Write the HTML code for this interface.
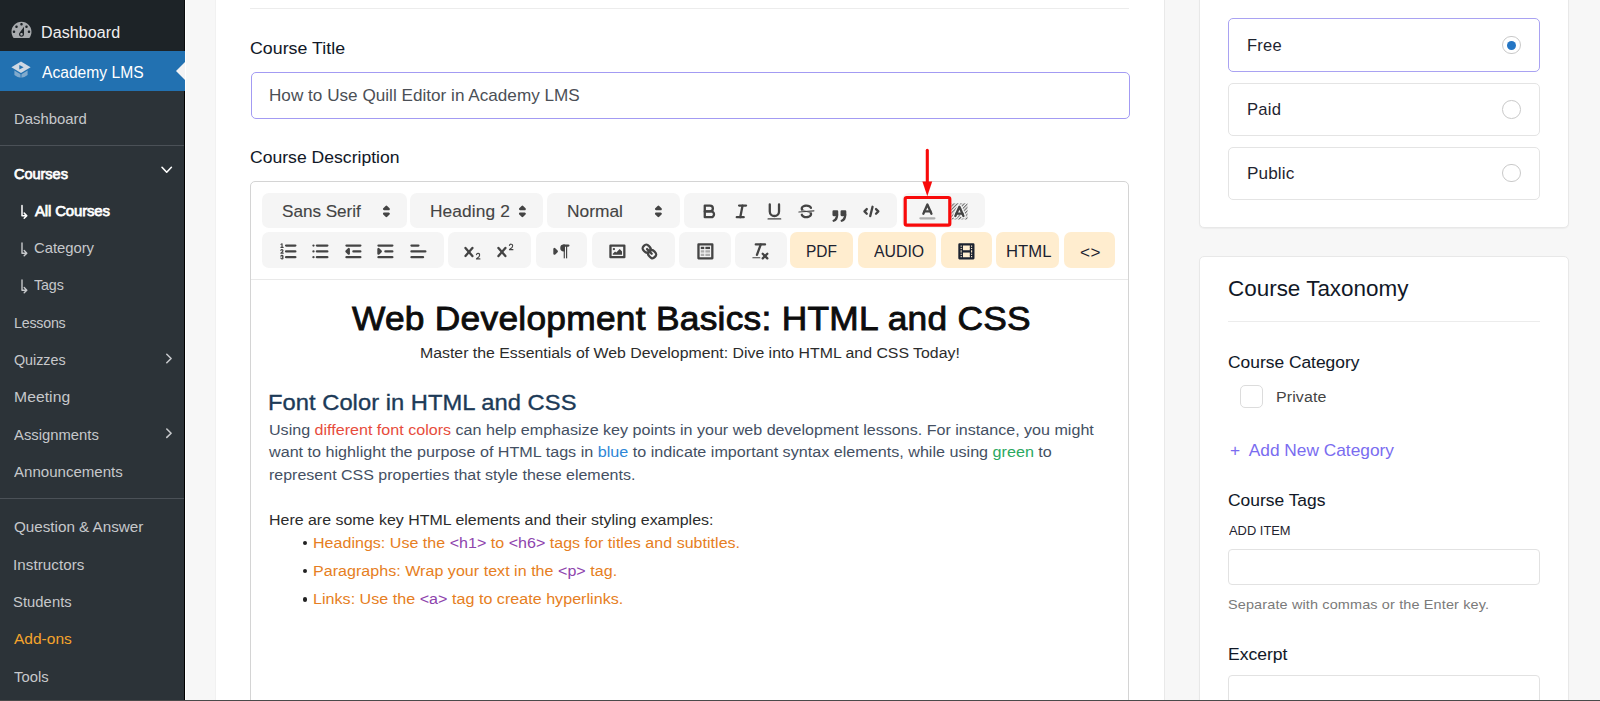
<!DOCTYPE html>
<html lang="en"><head><meta charset="utf-8"><title>Academy LMS – Edit Course</title>
<style>
html,body{margin:0;padding:0}
body{width:1600px;height:701px;overflow:hidden;position:relative;background:#f7f7f7;font-family:"Liberation Sans",sans-serif}
.t{position:absolute;white-space:nowrap;display:block;transform-origin:0 50%}
.b{position:absolute;box-sizing:border-box}
svg{position:absolute;overflow:visible}
.g{position:absolute;background:#f5f5f5;border-radius:7px}
.o{position:absolute;background:#ffedcf;border-radius:7px}
.q{width:20.8px;height:20.8px}
.q .s{fill:none;stroke:#444;stroke-width:2;stroke-linecap:round;stroke-linejoin:round}
.q .f{fill:#444}
.q .sf{fill:#444;stroke:#444;stroke-width:2;stroke-linecap:round;stroke-linejoin:round}
.q .th{stroke-width:1}
.q .tr{opacity:.4}
.q.v .s{stroke:#1c2230}.q.v .f{fill:#1c2230}

</style></head>
<body>
<!-- sidebar -->
<div class="b" style="left:0;top:0;width:185px;height:701px;background:#2c3338"></div>
<div class="b" style="left:0;top:0;width:185px;height:51px;background:#1d2327"></div>
<div class="b" style="left:0;top:51px;width:185px;height:40px;background:#2271b1"></div>
<div class="b" style="left:184px;top:0;width:1px;height:51px;background:#0a0c0e"></div>
<div class="b" style="left:184px;top:91px;width:1px;height:610px;background:#000"></div>
<div class="b" style="left:185px;top:0;width:1px;height:701px;background:#fff"></div>
<div class="b" style="left:0;top:145px;width:184px;height:1px;background:#4b5157"></div>
<div class="b" style="left:0;top:498px;width:184px;height:1px;background:#4b5157"></div>
<!-- main card -->
<div class="b" style="left:215px;top:-10px;width:950px;height:720px;background:#fff;border-right:1px solid #e9e9e9;border-left:1px solid #f1f1f1"></div>
<div class="b" style="left:250px;top:8px;width:879px;height:1px;background:#ececec"></div>
<div class="b" style="left:251px;top:72px;width:879px;height:47px;border:1px solid #a39bf3;border-radius:5px;background:#fff"></div>
<div class="b" style="left:250px;top:181px;width:879px;height:540px;border:1px solid #d4d4d4;border-radius:5px;background:#fff"></div>
<div class="b" style="left:251px;top:279px;width:877px;height:1px;background:#e9e9e9"></div>
<!-- right cards -->
<div class="b" style="left:1199px;top:-10px;width:370px;height:238px;background:#fff;border:1px solid #e8e8e8;border-radius:5px;box-shadow:0 1px 1px rgba(0,0,0,.04)"></div>
<div class="b" style="left:1199px;top:256px;width:370px;height:470px;background:#fff;border:1px solid #e8e8e8;border-radius:5px;box-shadow:0 1px 1px rgba(0,0,0,.04)"></div>
<div class="b" style="left:1228px;top:18px;width:312px;height:54px;border:1px solid #a9a2f2;border-radius:5px"></div>
<div class="b" style="left:1228px;top:83px;width:312px;height:53px;border:1px solid #e4e4e4;border-radius:5px"></div>
<div class="b" style="left:1228px;top:147px;width:312px;height:53px;border:1px solid #e4e4e4;border-radius:5px"></div>
<div class="b" style="left:1228px;top:321px;width:312px;height:1px;background:#ececec"></div>
<div class="b" style="left:1240px;top:385px;width:23px;height:23px;border:1px solid #dcdcdc;border-radius:5px"></div>
<div class="b" style="left:1228px;top:549px;width:312px;height:36px;border:1px solid #e2e2e2;border-radius:4px"></div>
<div class="b" style="left:1228px;top:675px;width:312px;height:60px;border:1px solid #e2e2e2;border-radius:4px"></div>
<!-- bottom edge -->
<div class="b" style="left:0;top:700px;width:1600px;height:1px;background:#4a4a4a;z-index:5"></div>
<!-- quill toolbar -->
<div class="g" style="left:262.20px;top:193.25px;width:144.45px;height:34.75px"></div>
<div class="g" style="left:410.45px;top:193.25px;width:132.95px;height:34.75px"></div>
<div class="g" style="left:546.70px;top:193.25px;width:132.95px;height:34.75px"></div>
<div class="g" style="left:683.95px;top:193.25px;width:213.45px;height:34.75px"></div>
<div class="g" style="left:901.70px;top:193.25px;width:83.70px;height:34.75px"></div>
<div class="g" style="left:262.20px;top:232.00px;width:181.95px;height:35.50px"></div>
<div class="g" style="left:447.70px;top:232.00px;width:83.45px;height:35.50px"></div>
<div class="g" style="left:535.70px;top:232.00px;width:51.45px;height:35.50px"></div>
<div class="g" style="left:591.70px;top:232.00px;width:83.70px;height:35.50px"></div>
<div class="g" style="left:679.20px;top:232.00px;width:51.95px;height:35.50px"></div>
<div class="g" style="left:734.70px;top:232.00px;width:51.95px;height:35.50px"></div>
<div class="o" style="left:790.20px;top:232.00px;width:62.70px;height:35.50px"></div>
<div class="o" style="left:857.70px;top:232.00px;width:78.45px;height:35.50px"></div>
<div class="o" style="left:940.70px;top:232.00px;width:51.60px;height:35.50px"></div>
<div class="o" style="left:996.10px;top:232.00px;width:63.10px;height:35.50px"></div>
<div class="o" style="left:1063.50px;top:232.00px;width:51.40px;height:35.50px"></div>
<svg class="q" viewBox="0 0 18 18" style="left:376.05px;top:200.50px"><polygon class="s" points="7 11 9 13 11 11 7 11"/><polygon class="s" points="7 7 9 5 11 7 7 7"/></svg>
<svg class="q" viewBox="0 0 18 18" style="left:512.20px;top:200.50px"><polygon class="s" points="7 11 9 13 11 11 7 11"/><polygon class="s" points="7 7 9 5 11 7 7 7"/></svg>
<svg class="q" viewBox="0 0 18 18" style="left:648.00px;top:200.50px"><polygon class="s" points="7 11 9 13 11 11 7 11"/><polygon class="s" points="7 7 9 5 11 7 7 7"/></svg>
<svg class="q" viewBox="0 0 18 18" style="left:698.95px;top:200.50px"><path class="s" d="M5,4H9.5A2.5,2.5,0,0,1,12,6.5v0A2.5,2.5,0,0,1,9.5,9H5V4Z"/><path class="s" d="M5,9h5.5A2.5,2.5,0,0,1,13,11.5v0A2.5,2.5,0,0,1,10.5,14H5V9Z"/></svg>
<svg class="q" viewBox="0 0 18 18" style="left:731.35px;top:200.50px"><line class="s" x1="7" x2="13" y1="4" y2="4"/><line class="s" x1="5" x2="11" y1="14" y2="14"/><line class="s" x1="8" x2="10" y1="14" y2="4"/></svg>
<svg class="q" viewBox="0 0 18 18" style="left:763.75px;top:200.50px"><path class="s" d="M5,3V9a4.012,4.012,0,0,0,4,4H9a4.012,4.012,0,0,0,4-4V3"/><rect class="f" height="1" rx="0.5" ry="0.5" width="12" x="3" y="15"/></svg>
<svg class="q" viewBox="0 0 18 18" style="left:796.15px;top:200.50px"><line class="s th" x1="15.5" x2="2.5" y1="8.5" y2="9.5"/><path class="f" d="M9.007,8C6.542,7.791,6,7.519,6,6.5,6,5.792,7.283,5,9,5c1.571,0,2.765.679,2.969,1.309a1,1,0,0,0,1.9-.617C13.356,4.106,11.354,3,9,3,6.2,3,4,4.538,4,6.5a3.2,3.2,0,0,0,.5,1.843Z"/><path class="f" d="M8.984,10C11.457,10.208,12,10.479,12,11.5c0,0.708-1.283,1.5-3,1.5-1.571,0-2.765-.679-2.969-1.309a1,1,0,1,0-1.9.617C4.644,13.894,6.646,15,9,15c2.8,0,5-1.538,5-3.5a3.2,3.2,0,0,0-.5-1.843Z"/></svg>
<svg class="q" viewBox="0 0 18 18" style="left:828.55px;top:200.50px"><g transform="translate(0 4.1)"><rect class="sf" height="3" width="3" x="4" y="5"/><rect class="sf" height="3" width="3" x="11" y="5"/><path class="sf" d="M7,8c0,4.031-3,5-3,5"/><path class="sf" d="M14,8c0,4.031-3,5-3,5"/></g></svg>
<svg class="q" viewBox="0 0 18 18" style="left:860.95px;top:200.50px"><polyline class="s" points="5 7 3 9 5 11"/><polyline class="s" points="13 7 15 9 13 11"/><line class="s" x1="10" x2="8" y1="5" y2="13"/></svg>
<svg class="q" viewBox="0 0 18 18" style="left:916.70px;top:200.50px"><line class="s tr" x1="3" x2="15" y1="15" y2="15"/><polyline class="s" points="5.5 11 9 3 12.5 11"/><line class="s" x1="11.63" x2="6.38" y1="9" y2="9"/></svg>
<svg class="q" viewBox="0 0 18 18" style="left:949.10px;top:200.50px"><defs><pattern id="chk" x="0" y="0" width="2.1" height="2.1" patternUnits="userSpaceOnUse" patternTransform="rotate(-45)"><rect x="0" y="0" width="2.1" height="0.95" fill="#444"/></pattern></defs><rect x="2" y="2" width="14" height="14" fill="url(#chk)" opacity=".78"/><polyline points="5.5 13 9 5 12.5 13" fill="none" stroke="#f5f5f5" stroke-width="4.2" stroke-linecap="round" stroke-linejoin="round"/><polyline class="s" points="5.5 13 9 5 12.5 13"/><line class="s" x1="11.63" x2="6.38" y1="11" y2="11"/></svg>
<svg class="q" viewBox="0 0 18 18" style="left:278.00px;top:240.90px"><line class="s" x1="7" x2="15" y1="4" y2="4"/><line class="s" x1="7" x2="15" y1="9" y2="9"/><line class="s" x1="7" x2="15" y1="14" y2="14"/><line class="s th" x1="2.5" x2="4.5" y1="5.5" y2="5.5"/><path class="f" d="M3.5,6A0.5,0.5,0,0,1,3,5.5V3.085l-0.276.138A0.5,0.5,0,0,1,2.053,3c-0.124-.247-0.023-0.324.224-0.447l1-.5A0.5,0.5,0,0,1,4,2.5v3A0.5,0.5,0,0,1,3.5,6Z"/><path class="s th" d="M4.5,10.5h-2c0-.234,1.85-1.076,1.85-2.234A0.959,0.959,0,0,0,2.5,8.156"/><path class="s th" d="M2.5,14.846a0.959,0.959,0,0,0,1.85-.109A0.7,0.7,0,0,0,3.75,14a0.688,0.688,0,0,0,.6-0.736,0.959,0.959,0,0,0-1.85-.109"/></svg>
<svg class="q" viewBox="0 0 18 18" style="left:310.40px;top:240.90px"><line class="s" x1="6" x2="15" y1="4" y2="4"/><line class="s" x1="6" x2="15" y1="9" y2="9"/><line class="s" x1="6" x2="15" y1="14" y2="14"/><line class="s" x1="3" x2="3" y1="4" y2="4"/><line class="s" x1="3" x2="3" y1="9" y2="9"/><line class="s" x1="3" x2="3" y1="14" y2="14"/></svg>
<svg class="q" viewBox="0 0 18 18" style="left:342.80px;top:240.90px"><line class="s" x1="3" x2="15" y1="14" y2="14"/><line class="s" x1="3" x2="15" y1="4" y2="4"/><line class="s" x1="9" x2="15" y1="9" y2="9"/><polyline class="sf" points="5 7 5 11 3 9 5 7"/></svg>
<svg class="q" viewBox="0 0 18 18" style="left:375.20px;top:240.90px"><line class="s" x1="3" x2="15" y1="14" y2="14"/><line class="s" x1="3" x2="15" y1="4" y2="4"/><line class="s" x1="9" x2="15" y1="9" y2="9"/><polyline class="sf" points="3 7 3 11 5 9 3 7"/></svg>
<svg class="q" viewBox="0 0 18 18" style="left:407.60px;top:240.90px"><line class="s" x1="3" x2="15" y1="9" y2="9"/><line class="s" x1="3" x2="13" y1="14" y2="14"/><line class="s" x1="3" x2="9" y1="4" y2="4"/></svg>
<svg class="q" viewBox="0 0 18 18" style="left:462.30px;top:240.90px"><path class="f" d="M15.5,15H13.861a3.858,3.858,0,0,0,1.914-2.975,1.8,1.8,0,0,0-1.6-1.751A1.921,1.921,0,0,0,12.021,11.7a0.5,0.5,0,1,0,.957.291h0a0.914,0.914,0,0,1,1.053-.725,0.81,0.81,0,0,1,.744.762c0,1.076-1.17,1.87-1.94,2.431A1.456,1.456,0,0,0,12,15.5a0.5,0.5,0,0,0,.5.5h3A0.5,0.5,0,0,0,15.5,15Z"/><path class="f" d="M9.65,5.241a1,1,0,0,0-1.409.108L6,7.964,3.759,5.349A1,1,0,0,0,2.241,6.649L4.684,9.5,2.241,12.35A1,1,0,0,0,3.759,13.65L6,11.036,8.241,13.65a1,1,0,1,0,1.518-1.3L7.316,9.5,9.759,6.651A1,1,0,0,0,9.65,5.241Z"/></svg>
<svg class="q" viewBox="0 0 18 18" style="left:494.70px;top:240.90px"><path class="f" d="M15.5,7H13.861a4.015,4.015,0,0,0,1.914-2.975,1.8,1.8,0,0,0-1.6-1.751A1.922,1.922,0,0,0,12.021,3.7a0.5,0.5,0,1,0,.957.291,0.917,0.917,0,0,1,1.053-.725,0.81,0.81,0,0,1,.744.762c0,1.077-1.164,1.925-1.934,2.486A1.423,1.423,0,0,0,12,7.5a0.5,0.5,0,0,0,.5.5h3A0.5,0.5,0,0,0,15.5,7Z"/><path class="f" d="M9.651,5.241a1,1,0,0,0-1.41.108L6,7.964,3.759,5.349a1,1,0,1,0-1.519,1.3L4.683,9.5,2.241,12.35a1,1,0,1,0,1.519,1.3L6,11.036,8.241,13.65a1,1,0,0,0,1.519-1.3L7.317,9.5,9.759,6.651A1,1,0,0,0,9.651,5.241Z"/></svg>
<svg class="q" viewBox="0 0 18 18" style="left:551.00px;top:240.90px"><polygon class="sf" points="3 11 5 9 3 7 3 11"/><line class="sf" x1="15" x2="11" y1="4" y2="4"/><path class="f" d="M11,3a3,3,0,0,0,0,6h1V3H11Z"/><rect class="f" height="11" width="1" x="11" y="4"/><rect class="f" height="11" width="1" x="13" y="4"/></svg>
<svg class="q" viewBox="0 0 18 18" style="left:606.50px;top:240.90px"><rect class="s" height="10" width="12" x="3" y="4"/><circle class="f" cx="6" cy="7" r="1"/><polyline class="f" points="5 12 5 11 7 9 8 10 11 7 13 9 13 12 5 12"/></svg>
<svg class="q" viewBox="0 0 18 18" style="left:638.90px;top:240.90px"><line class="s" x1="7" x2="11" y1="7" y2="11"/><path class="s" d="M8.9,4.577a3.476,3.476,0,0,1,.36,4.679A3.476,3.476,0,0,1,4.577,8.9C3.185,7.5,2.035,6.4,4.217,4.217S7.5,3.185,8.9,4.577Z"/><path class="s" d="M13.423,9.1a3.476,3.476,0,0,0-4.679-.36,3.476,3.476,0,0,0,.36,4.679c1.392,1.392,2.5,2.542,4.679.36S14.815,10.5,13.423,9.1Z"/></svg>
<svg class="q" viewBox="0 0 18 18" style="left:695.00px;top:240.90px"><rect class="s" height="12" width="12" x="3" y="3"/><rect class="f" height="2" width="3" x="5" y="5"/><rect class="f" height="2" width="4" x="9" y="5"/><g class="f tr"><rect height="2" width="3" x="5" y="8"/><rect height="2" width="4" x="9" y="8"/><rect height="2" width="3" x="5" y="11"/><rect height="2" width="4" x="9" y="11"/></g></svg>
<svg class="q" viewBox="0 0 18 18" style="left:749.90px;top:240.90px"><line class="s" x1="5" x2="13" y1="3" y2="3"/><line class="s" x1="6" x2="9.35" y1="12" y2="3"/><line class="s" x1="11" x2="15" y1="11" y2="15"/><line class="s" x1="15" x2="11" y1="11" y2="15"/><rect class="f" height="1" rx="0.5" ry="0.5" width="7" x="2" y="14"/></svg>
<svg class="q v" viewBox="0 0 18 18" style="left:956.00px;top:240.90px"><rect class="s" height="12" width="12" x="3" y="3"/><rect class="f" height="12" width="1" x="5" y="3"/><rect class="f" height="12" width="1" x="12" y="3"/><rect class="f" height="2" width="8" x="5" y="8"/><rect class="f" height="1" width="3" x="3" y="5"/><rect class="f" height="1" width="3" x="3" y="7"/><rect class="f" height="1" width="3" x="3" y="10"/><rect class="f" height="1" width="3" x="3" y="12"/><rect class="f" height="1" width="3" x="12" y="5"/><rect class="f" height="1" width="3" x="12" y="7"/><rect class="f" height="1" width="3" x="12" y="10"/><rect class="f" height="1" width="3" x="12" y="12"/></svg>
<svg style="left:0;top:0;width:1600px;height:701px" viewBox="0 0 1600 701"><rect x="905.2" y="197.5" width="44.6" height="27.7" rx="1.6" fill="none" stroke="#f80a0a" stroke-width="3.2"/><line x1="927.3" y1="150.4" x2="927.3" y2="184" stroke="#f80a0a" stroke-width="3.1" stroke-linecap="round"/><path d="M922.4 181.4 L927.3 196.2 L932.2 181.4 Z" fill="#f80a0a"/></svg>
<!-- sidebar icons -->
<svg viewBox="0 0 20 20" style="left:8.5px;top:17.6px;width:25px;height:25px"><path fill="#a7aaad" fill-rule="evenodd" d="M3.76 16h12.48c1.100-1.370 1.760-3.110 1.760-5 0-4.420-3.580-8-8-8s-8 3.580-8 8c0 1.890.660 3.630 1.760 5zM10 4c.55 0 1 .45 1 1s-.45 1-1 1-1-.45-1-1 .45-1 1-1zM6 6c.55 0 1 .45 1 1s-.45 1-1 1-1-.45-1-1 .45-1 1-1zm8 0c.55 0 1 .45 1 1s-.45 1-1 1-1-.45-1-1 .45-1 1-1zm-5.370 5.550L12 7v6c0 1.100-.9 2-2 2s-2-.9-2-2c0-.570.240-1.080.630-1.450zM4 10c.55 0 1 .45 1 1s-.45 1-1 1-1-.45-1-1 .45-1 1-1zm12 0c.55 0 1 .45 1 1s-.45 1-1 1-1-.45-1-1 .45-1 1-1zm-5 3c0-.55-.45-1-1-1s-1 .45-1 1 .45 1 1 1 1-.45 1-1z"/></svg>
<svg viewBox="0 0 20 18" style="left:11px;top:61px;width:20px;height:18px"><path fill="#cfd8e3" d="M10 .5 L19.6 6.2 L10 12 L.4 6.2 Z"/><path fill="#2271b1" d="M8.3 3.9 L12.6 6.2 L8.3 8.5 Z"/><path fill="#cfd8e3" opacity=".55" d="M3.4 9.6 L10 13.6 L16.6 9.6 L16.6 14 Q10 19.5 3.4 14 Z"/><path fill="#2271b1" opacity=".7" d="M9.4 13 h1.2 v5 h-1.200z"/></svg>
<!-- current-menu notch -->
<svg viewBox="0 0 9 18" style="left:176px;top:62px;width:9px;height:18px"><path d="M9 0 L0 9 L9 18 Z" fill="#f3f3f4"/></svg>
<!-- sidebar chevrons / sub arrows -->
<svg viewBox="0 0 185 701" style="left:0;top:0;width:185px;height:701px" fill="none" stroke-linecap="round" stroke-linejoin="round">
<path d="M162 167.300 l4.700 4.900 l4.700-4.900" stroke="#fff" stroke-width="1.600"/>
<path d="M166.800 354.300 l4.300 4.200 l-4.300 4.200" stroke="#c6c8cb" stroke-width="1.600"/>
<path d="M166.800 429 l4.300 4.200 l-4.300 4.200" stroke="#c6c8cb" stroke-width="1.600"/>
<path d="M22 205.500 v10.200 h4.600 m-2.400-2.600 l2.600 2.600 l-2.600 2.600" stroke="#fff" stroke-width="1.500"/>
<path d="M22 243 v10.200 h4.600 m-2.400-2.600 l2.600 2.600 l-2.600 2.600" stroke="#c6c8cb" stroke-width="1.400"/>
<path d="M22 280 v10.200 h4.600 m-2.400-2.600 l2.600 2.600 l-2.600 2.600" stroke="#c6c8cb" stroke-width="1.400"/>
</svg>
<!-- radios -->
<div class="b" style="left:1502px;top:35.700px;width:18.600px;height:18.600px;border:1px solid #c9c9c9;border-radius:50%;background:#fff"></div>
<div class="b" style="left:1506.800px;top:40.500px;width:9px;height:9px;border-radius:50%;background:#2576c4"></div>
<div class="b" style="left:1502px;top:100px;width:18.600px;height:18.600px;border:1px solid #c9c9c9;border-radius:50%;background:#fff"></div>
<div class="b" style="left:1502px;top:163.900px;width:18.600px;height:18.600px;border:1px solid #c9c9c9;border-radius:50%;background:#fff"></div>
<!-- list bullets -->
<div class="b" style="left:302.500px;top:540.500px;width:4.800px;height:4.800px;border-radius:50%;background:#222"></div>
<div class="b" style="left:302.500px;top:568.500px;width:4.800px;height:4.800px;border-radius:50%;background:#222"></div>
<div class="b" style="left:302.500px;top:597px;width:4.800px;height:4.800px;border-radius:50%;background:#222"></div>

<!-- text layer -->
<span class="t" style="left:41.22px;top:23.26px;font-size:16px;line-height:20px;color:#f0f0f1;letter-spacing:0.08px;transform:scaleX(1.0028);">Dashboard</span>
<span class="t" style="left:41.85px;top:62.9px;font-size:16px;line-height:20px;color:#ffffff;letter-spacing:-0.01px;transform:scaleX(0.9774);">Academy LMS</span>
<span class="t" style="left:13.8px;top:109.3px;font-size:15px;line-height:19px;color:#c6c8cb;transform:scaleX(0.9920);">Dashboard</span>
<span class="t" style="left:13.93px;top:164.3px;font-size:15px;line-height:19px;color:#ffffff;letter-spacing:-0.08px;transform:scaleX(0.9739);-webkit-text-stroke:0.75px #fff;">Courses</span>
<span class="t" style="left:34.58px;top:201.22px;font-size:15px;line-height:19px;color:#ffffff;letter-spacing:-0.14px;transform:scaleX(0.9960);-webkit-text-stroke:0.75px #fff;">All Courses</span>
<span class="t" style="left:33.67px;top:238.22px;font-size:15px;line-height:19px;color:#c6c8cb;letter-spacing:-0.06px;transform:scaleX(0.9922);">Category</span>
<span class="t" style="left:34.08px;top:275.22px;font-size:15px;line-height:19px;color:#c6c8cb;letter-spacing:-0.12px;transform:scaleX(0.9531);">Tags</span>
<span class="t" style="left:13.9px;top:313.1px;font-size:15px;line-height:19px;color:#c6c8cb;letter-spacing:-0.24px;transform:scaleX(0.9500);">Lessons</span>
<span class="t" style="left:13.71px;top:350.3px;font-size:15px;line-height:19px;color:#c6c8cb;letter-spacing:-0.03px;transform:scaleX(0.9559);">Quizzes</span>
<span class="t" style="left:13.57px;top:386.86px;font-size:15px;line-height:19px;color:#c6c8cb;letter-spacing:0.06px;transform:scaleX(1.0454);">Meeting</span>
<span class="t" style="left:13.8px;top:424.8px;font-size:15px;line-height:19px;color:#c6c8cb;transform:scaleX(0.9875);">Assignments</span>
<span class="t" style="left:13.8px;top:462px;font-size:15px;line-height:19px;color:#c6c8cb;transform:scaleX(1.0036);">Announcements</span>
<span class="t" style="left:13.68px;top:517.22px;font-size:15px;line-height:19px;color:#c6c8cb;letter-spacing:-0.03px;transform:scaleX(1.0174);">Question &amp; Answer</span>
<span class="t" style="left:13.07px;top:555.1px;font-size:15px;line-height:19px;color:#c6c8cb;letter-spacing:0.06px;transform:scaleX(1.0110);">Instructors</span>
<span class="t" style="left:13.24px;top:592.3px;font-size:15px;line-height:19px;color:#c6c8cb;letter-spacing:0.06px;transform:scaleX(0.9845);">Students</span>
<span class="t" style="left:13.8px;top:629.3px;font-size:15px;line-height:19px;color:#f5a42c;transform:scaleX(1.0345);">Add-ons</span>
<span class="t" style="left:13.8px;top:666.8px;font-size:15px;line-height:19px;color:#c6c8cb;transform:scaleX(0.9877);">Tools</span>
<span class="t" style="left:250.48px;top:37.55px;font-size:16.6px;line-height:21px;color:#111827;letter-spacing:0.03px;transform:scaleX(1.0690);-webkit-text-stroke:0.05px #111827;">Course Title</span>
<span class="t" style="left:269.34px;top:85.32px;font-size:16.4px;line-height:20px;color:#4b4f56;letter-spacing:0.02px;transform:scaleX(1.0437);">How to Use Quill Editor in Academy LMS</span>
<span class="t" style="left:250.13px;top:146.75px;font-size:16.6px;line-height:21px;color:#111827;letter-spacing:0.02px;transform:scaleX(1.0574);-webkit-text-stroke:0.05px #111827;">Course Description</span>
<span class="t" style="left:281.95px;top:201.25px;font-size:16.6px;line-height:21px;color:#444444;letter-spacing:-0.04px;transform:scaleX(1.0346);-webkit-text-stroke:0.12px #444444;">Sans Serif</span>
<span class="t" style="left:429.67px;top:201.25px;font-size:16.6px;line-height:21px;color:#444444;letter-spacing:0.1px;transform:scaleX(1.0437);-webkit-text-stroke:0.12px #444444;">Heading 2</span>
<span class="t" style="left:567.2px;top:201.25px;font-size:16.6px;line-height:21px;color:#444444;transform:scaleX(1.0463);-webkit-text-stroke:0.12px #444444;">Normal</span>
<span class="t" style="left:805.99px;top:241.81px;font-size:16px;line-height:20px;color:#1c2230;letter-spacing:-0.04px;transform:scaleX(0.9656);">PDF</span>
<span class="t" style="left:874.22px;top:241.81px;font-size:16px;line-height:20px;color:#1c2230;letter-spacing:-0.01px;transform:scaleX(0.9897);">AUDIO</span>
<span class="t" style="left:1005.64px;top:241.81px;font-size:16px;line-height:20px;color:#1c2230;letter-spacing:0.07px;transform:scaleX(1.0422);">HTML</span>
<span class="t" style="left:1079.83px;top:242.62px;font-size:16px;line-height:20px;color:#1c2230;letter-spacing:0.41px;transform:scaleX(1.0700);">&lt;&gt;</span>
<span class="t" style="left:351.76px;top:298.07px;font-size:33px;line-height:41px;color:#0d0d0d;letter-spacing:0.25px;transform:scaleX(1.0700);-webkit-text-stroke:0.85px #0d0d0d;">Web Development Basics: HTML and CSS</span>
<span class="t" style="left:419.78px;top:342.66px;font-size:15.4px;line-height:19px;color:#2c2c2c;transform:scaleX(1.0300);">Master the Essentials of Web Development: Dive into HTML and CSS Today!</span>
<span class="t" style="left:268.32px;top:388.97px;font-size:22.6px;line-height:28px;color:#1c3a57;letter-spacing:0.02px;transform:scaleX(1.0511);-webkit-text-stroke:0.35px #1c3a57;">Font Color in HTML and CSS</span>
<span class="t" style="left:268.78px;top:420.36px;font-size:15.4px;line-height:19px;color:#445063;transform:scaleX(1.0449);">Using <span style="color:#e74c3c">different font colors</span> can help emphasize key points in your web development lessons. For instance, you might</span>
<span class="t" style="left:268.78px;top:442.36px;font-size:15.4px;line-height:19px;color:#445063;transform:scaleX(1.0489);">want to highlight the purpose of HTML tags in <span style="color:#2e86d6">blue</span> to indicate important syntax elements, while using <span style="color:#2aa860">green</span> to</span>
<span class="t" style="left:268.58px;top:464.86px;font-size:15.4px;line-height:19px;color:#445063;letter-spacing:0.01px;transform:scaleX(1.0380);">represent CSS properties that style these elements.</span>
<span class="t" style="left:268.55px;top:509.86px;font-size:15.4px;line-height:19px;color:#2c2c2c;letter-spacing:0.01px;transform:scaleX(1.0350);">Here are some key HTML elements and their styling examples:</span>
<span class="t" style="left:313.27px;top:532.86px;font-size:15.4px;line-height:19px;color:#e67e22;letter-spacing:0.02px;transform:scaleX(1.0411);">Headings: Use the <span style="color:#8e44ad">&lt;h1&gt;</span> to <span style="color:#8e44ad">&lt;h6&gt;</span> tags for titles and subtitles.</span>
<span class="t" style="left:313.25px;top:560.66px;font-size:15.4px;line-height:19px;color:#e67e22;letter-spacing:0.03px;transform:scaleX(1.0420);">Paragraphs: Wrap your text in the <span style="color:#8e44ad">&lt;p&gt;</span> tag.</span>
<span class="t" style="left:313.26px;top:589.16px;font-size:15.4px;line-height:19px;color:#e67e22;letter-spacing:0.02px;transform:scaleX(1.0449);">Links: Use the <span style="color:#8e44ad">&lt;a&gt;</span> tag to create hyperlinks.</span>
<span class="t" style="left:1247.49px;top:35.32px;font-size:16.4px;line-height:20px;color:#1f2430;letter-spacing:0.24px;transform:scaleX(1.0070);">Free</span>
<span class="t" style="left:1247.12px;top:99.02px;font-size:16.4px;line-height:20px;color:#1f2430;letter-spacing:0.23px;transform:scaleX(1.0161);">Paid</span>
<span class="t" style="left:1247.23px;top:163.12px;font-size:16.4px;line-height:20px;color:#1f2430;letter-spacing:0.1px;transform:scaleX(1.0467);">Public</span>
<span class="t" style="left:1227.62px;top:275.7px;font-size:21.4px;line-height:27px;color:#111827;letter-spacing:-0.01px;transform:scaleX(1.0501);">Course Taxonomy</span>
<span class="t" style="left:1228.2px;top:351.55px;font-size:16.6px;line-height:21px;color:#111827;transform:scaleX(1.0480);-webkit-text-stroke:0.05px #111827;">Course Category</span>
<span class="t" style="left:1275.91px;top:387.36px;font-size:15.4px;line-height:19px;color:#444;letter-spacing:0.11px;transform:scaleX(1.0362);">Private</span>
<span class="t" style="left:1229.81px;top:439.83px;font-size:16.6px;line-height:21px;color:#7a6cf0;transform:scaleX(1.0425);">+&nbsp; Add New Category</span>
<span class="t" style="left:1228.2px;top:490.05px;font-size:16.6px;line-height:21px;color:#111827;transform:scaleX(1.0495);-webkit-text-stroke:0.05px #111827;">Course Tags</span>
<span class="t" style="left:1228.59px;top:522.8px;font-size:13px;line-height:16px;color:#1f2430;transform:scaleX(0.9915);">ADD ITEM</span>
<span class="t" style="left:1228.02px;top:595.82px;font-size:13.5px;line-height:17px;color:#7a7a7a;letter-spacing:0.13px;transform:scaleX(1.0700);">Separate with commas or the Enter key.</span>
<span class="t" style="left:1228.2px;top:643.55px;font-size:16.6px;line-height:21px;color:#111827;transform:scaleX(1.0568);-webkit-text-stroke:0.05px #111827;">Excerpt</span>
</body></html>
